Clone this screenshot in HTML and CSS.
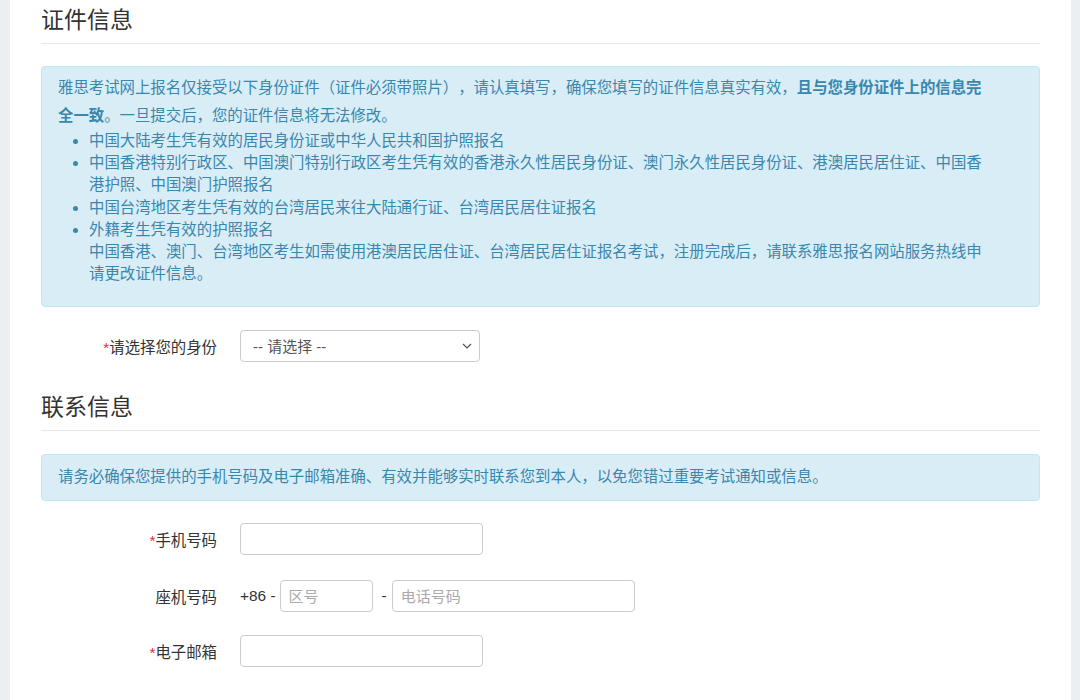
FILE: index.html
```html
<!DOCTYPE html>
<html lang="zh-CN">
<head>
<meta charset="utf-8">
<title>证件信息</title>
<link rel="stylesheet" href="styles.css">
</head>
<body>
<div class="panel">
  <h2 class="legend">证件信息</h2>
  <div class="alert alert-big">
    <p class="intro">雅思考试网上报名仅接受以下身份证件（证件必须带照片），请认真填写，确保您填写的证件信息真实有效，<b>且与您身份证件上的信息完全一致</b>。一旦提交后，您的证件信息将无法修改。</p>
    <ul class="list">
      <li>中国大陆考生凭有效的居民身份证或中华人民共和国护照报名</li>
      <li>中国香港特别行政区、中国澳门特别行政区考生凭有效的香港永久性居民身份证、澳门永久性居民身份证、港澳居民居住证、中国香港护照、中国澳门护照报名</li>
      <li>中国台湾地区考生凭有效的台湾居民来往大陆通行证、台湾居民居住证报名</li>
      <li>外籍考生凭有效的护照报名<br>中国香港、澳门、台湾地区考生如需使用港澳居民居住证、台湾居民居住证报名考试，注册完成后，请联系雅思报名网站服务热线申请更改证件信息。</li>
    </ul>
  </div>
  <div class="row row-first">
    <label class="label"><span class="req">*</span>请选择您的身份</label>
    <div class="select-wrap">
      <select class="select"><option>-- 请选择 --</option></select>
      <svg class="chev" width="10" height="6" viewBox="0 0 10 6"><path d="M1 1 L5 5 L9 1" fill="none" stroke="#555" stroke-width="1.2"/></svg>
    </div>
  </div>

  <h2 class="legend legend-2">联系信息</h2>
  <div class="alert alert-small">请务必确保您提供的手机号码及电子邮箱准确、有效并能够实时联系您到本人，以免您错过重要考试通知或信息。</div>
  <div class="row row-phone">
    <label class="label"><span class="req">*</span>手机号码</label>
    <input class="input" type="text">
  </div>
  <div class="row row-tel">
    <label class="label">座机号码</label>
    <div class="phone">
      <span class="prefix">+86 -</span>
      <input class="input input-area" type="text" placeholder="区号">
      <span class="dash">-</span>
      <input class="input" type="text" placeholder="电话号码">
    </div>
  </div>
  <div class="row row-mail">
    <label class="label"><span class="req">*</span>电子邮箱</label>
    <input class="input" type="text">
  </div>
</div>
</body>
</html>
```
FILE: styles.css
```css
html, body {
  margin: 0;
  padding: 0;
  background: #eceff1;
}
body {
  font-family: "Liberation Sans", "Noto Sans CJK SC", sans-serif;
  color: #333;
  height: 700px;
  overflow: hidden;
  text-spacing-trim: space-all;
}
.panel {
  margin: 0 9px 0 10px;
  background: #fff;
  padding: 0 31px 40px 31px;
  min-height: 700px;
  box-sizing: border-box;
}
.legend {
  margin: 0;
  font-size: 23px;
  font-weight: normal;
  line-height: 40px;
  padding-bottom: 3px;
  border-bottom: 1px solid #e8e8e8;
  color: #333;
}
.legend-2 {
  margin-top: 25px;
}
.alert {
  background: #d9edf7;
  border: 1px solid #bce8f1;
  border-radius: 4px;
  color: #3a87ad;
  font-size: 15.4px;
  text-spacing-trim: space-all;
}
.alert-big {
  margin-top: 22px;
  padding: 7px 45px 21px 16px;
}
.intro {
  margin: 0;
  line-height: 28px;
}
.intro b {
  font-weight: bold;
}
.list {
  margin: 0;
  padding-left: 31px;
  line-height: 22.2px;
}
.alert-small {
  margin-top: 23px;
  padding: 11px 16px 12px 16px;
  line-height: 22px;
}
.row {
  display: grid;
  grid-template-columns: 176px auto;
  column-gap: 23px;
  align-items: center;
}
.row-first {
  margin-top: 23px;
}
.row-phone {
  margin-top: 22px;
}
.row-tel {
  margin-top: 25px;
}
.row-mail {
  margin-top: 23px;
}
.label {
  text-align: right;
  font-size: 15.4px;
  color: #333;
}
.req {
  color: #e5302b;
}
.select-wrap {
  position: relative;
  width: 240px;
  height: 32px;
  justify-self: start;
}
.select {
  appearance: none;
  -webkit-appearance: none;
  width: 240px;
  height: 32px;
  border: 1px solid #ccc;
  border-radius: 4px;
  background: #fff;
  font-family: "Liberation Sans", "Noto Sans CJK SC", sans-serif;
  font-size: 15px;
  color: #555;
  padding: 0 12px;
  margin: 0;
  display: block;
}
.chev {
  position: absolute;
  right: 8px;
  top: 13px;
  pointer-events: none;
}
.input {
  width: 243px;
  height: 32px;
  box-sizing: border-box;
  border: 1px solid #ccc;
  border-radius: 4px;
  padding: 0 8px;
  font-family: "Liberation Sans", "Noto Sans CJK SC", sans-serif;
  font-size: 15px;
  color: #555;
  justify-self: start;
  margin: 0;
}
.input::placeholder {
  color: #aaa;
}
.phone {
  display: flex;
  align-items: center;
  font-size: 15.4px;
  color: #333;
}
.prefix {
  margin-right: 4px;
}
.input-area {
  width: 93px;
}
.dash {
  margin: 0 5px 0 9px;
}
```
